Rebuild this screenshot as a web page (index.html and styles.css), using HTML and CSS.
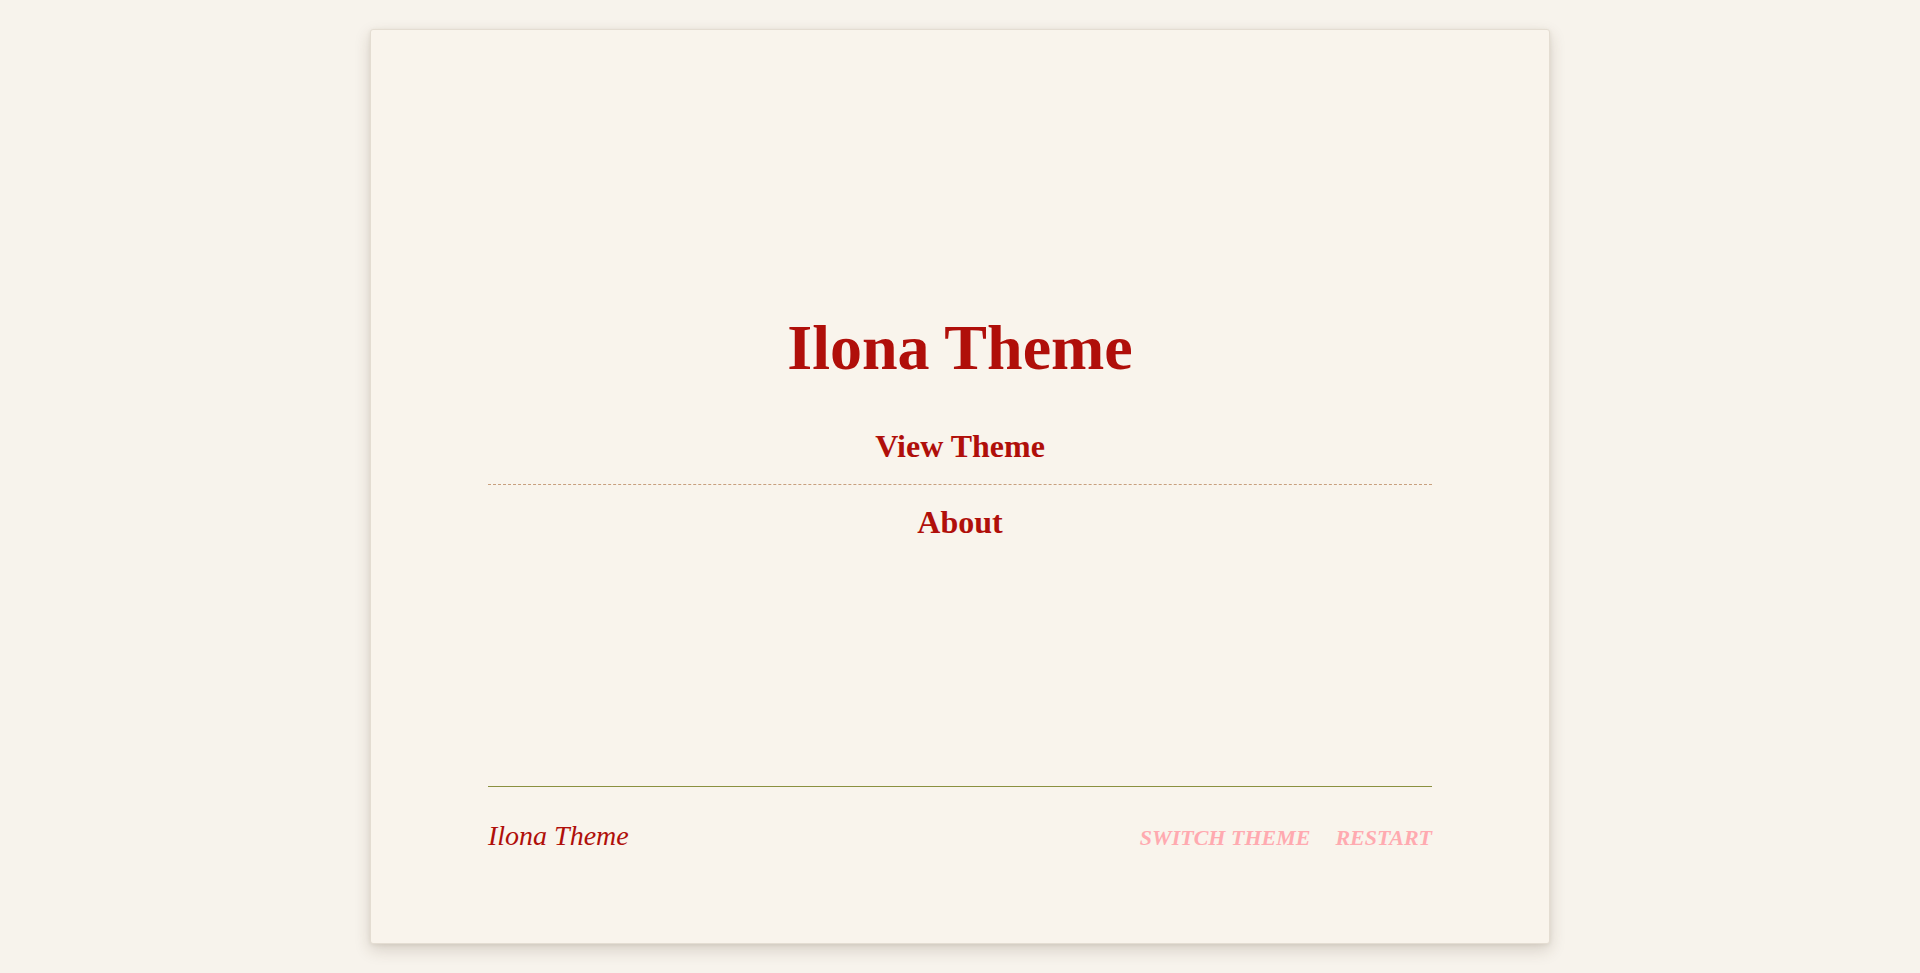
FILE: index.html
```html
<!DOCTYPE html>
<html lang="en">
<head>
<meta charset="utf-8">
<title>Ilona Theme</title>
<link rel="stylesheet" href="styles.css">
</head>
<body>
<div class="card">
  <main class="main">
    <h1 class="title">Ilona Theme</h1>
    <ul class="menu">
      <li class="menu-item"><a href="#">View Theme</a></li>
      <li class="menu-item"><a href="#">About</a></li>
    </ul>
  </main>
  <footer class="footer">
    <span class="footer-title">Ilona Theme</span>
    <nav class="footer-links">
      <a href="#">SWITCH THEME</a>
      <a href="#">RESTART</a>
    </nav>
  </footer>
</div>
</body>
</html>
```
FILE: styles.css
```css
html, body {
  margin: 0;
  padding: 0;
}
body {
  background: #f7f3ec;
  font-family: "Liberation Serif", "Times New Roman", serif;
  color: #b00f0a;
  padding-top: 29px;
  height: 973px;
  box-sizing: border-box;
  overflow: hidden;
}
.card {
  width: 1180px;
  height: 915px;
  margin: 0 auto;
  box-sizing: border-box;
  background: #f9f4ec;
  border: 1px solid #e4ddd2;
  border-radius: 3px;
  box-shadow: 0 6px 16px rgba(70, 50, 30, 0.18), 0 1px 4px rgba(70, 50, 30, 0.08);
  padding: 0 117px;
  display: flex;
  flex-direction: column;
}
.main {
  padding-top: 279px;
  text-align: center;
}
.title {
  margin: 0 0 24px;
  font-size: 64px;
  line-height: 77px;
  font-weight: bold;
  color: #b00f0a;
}
.menu {
  list-style: none;
  margin: 0;
  padding: 0;
}
.menu-item {
  padding: 18px 0 19px;
  line-height: 37px;
  font-size: 32px;
  font-weight: bold;
  border-bottom: 1px dashed #c8a07e;
}
.menu-item:last-child {
  padding-top: 19px;
  border-bottom: none;
}
.menu-item a {
  color: #b00f0a;
  text-decoration: none;
}
.footer {
  margin-top: auto;
  border-top: 1px solid #8b9040;
  padding: 32px 0 90px;
  display: flex;
  justify-content: space-between;
  align-items: baseline;
}
.footer-title {
  font-style: italic;
  font-size: 28px;
  line-height: 34px;
  color: #b00f0a;
}
.footer-links {
  display: flex;
  gap: 25px;
}
.footer-links a {
  font-style: italic;
  font-weight: bold;
  font-size: 22px;
  color: #ffaab0;
  text-decoration: none;
}
```
